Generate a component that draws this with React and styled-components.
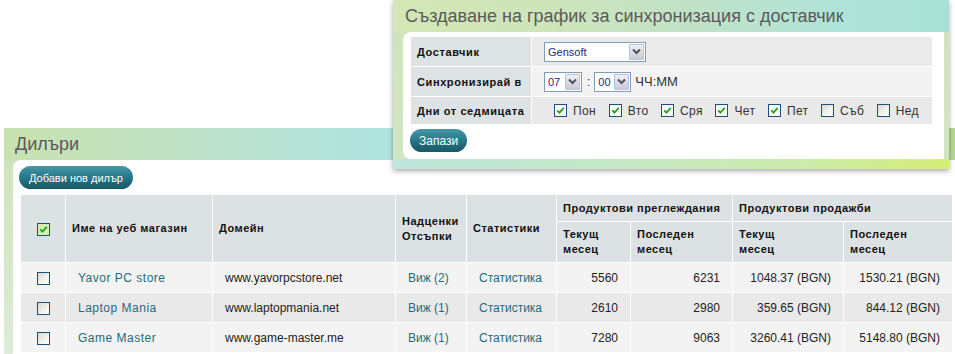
import React from "react";
import styled, { createGlobalStyle } from "styled-components";

const Global = createGlobalStyle`
  html, body { margin: 0; padding: 0; background: #fff; }
  body { font-family: "Liberation Sans", Arial, sans-serif; color: #222; }
  * { box-sizing: border-box; }
`;

const Page = styled.div`
  position: relative;
  width: 955px;
  height: 354px;
  overflow: hidden;
  padding: 128px 0 0 4px;
`;

const Panel = styled.section`
  width: 960px;
  padding: 0 0 0 9px;
  background:
    linear-gradient(90deg, #c9e2b0 0%, #c2e1c0 14%, #b6e3d6 30%, #afe3df 40%, #b6e4da 70%, #bfe1c0 88%, #b3d78e 100%) top / 100% 32px no-repeat,
    linear-gradient(180deg, #cbe3b6 0%, #d6e8cc 60%, #dfecd8 100%);
`;

const PanelTitle = styled.h2`
  margin: 0;
  height: 32px;
  line-height: 32px;
  padding-left: 2px;
  font-size: 18px;
  font-weight: normal;
  color: #5a5a5a;
`;

const PanelInner = styled.div`
  background: #fff;
  border-top-left-radius: 8px;
  padding: 6px 0 6px 6px;
`;

const PillButton = styled.button`
  display: inline-flex;
  align-items: center;
  height: 23px;
  padding: 0 ${(p) => p.$pad || 10}px;
  border: none;
  border-radius: 12px;
  background: linear-gradient(180deg, #4697a8 0%, #2c7f90 40%, #1f6676 75%, #1a5a68 100%);
  color: #fff;
  font-family: "Liberation Sans", Arial, sans-serif;
  font-size: ${(p) => p.$fs || 12}px;
  cursor: pointer;
`;

const DataTable = styled.table`
  margin: 5px 0 0 1px;
  width: 932px;
  table-layout: fixed;
  border-collapse: collapse;
`;

const Th = styled.th`
  background: #dce1e3;
  border: 1px solid #fff;
  padding: 0 6px;
  text-align: ${(p) => (p.$center ? "center" : "left")};
  vertical-align: middle;
  font-size: 11px;
  font-weight: bold;
  letter-spacing: 0.5px;
  line-height: 15px;
  color: #111;
`;

const HeadRow = styled.tr`
  height: ${(p) => p.$h}px;
`;

const BodyRow = styled.tr`
  height: 30px;
  background: ${(p) => (p.$alt ? "#eae9e9" : "#f4f3f3")};
`;

const Td = styled.td`
  border: 1px solid #fff;
  padding: 0 12px;
  font-size: 12px;
  white-space: nowrap;
  text-align: ${(p) => (p.$align || "left")};
  color: #222;
`;

const Link = styled.a`
  color: #1e6c7a;
  text-decoration: none;
  letter-spacing: ${(p) => (p.$wide ? "0.5px" : "0")};
`;

const Box = styled.span`
  display: inline-flex;
  align-items: center;
  justify-content: center;
  width: 13px;
  height: 13px;
  border: 1px solid #1f4f80;
  background: ${(p) =>
    p.$green
      ? "#d4efb2"
      : p.$checked
      ? "#fbfbf8"
      : "linear-gradient(135deg, #d8d8d0 0%, #efefea 50%, #ffffff 100%)"};
  vertical-align: middle;
`;

const Check = ({ checked, green }) => (
  <Box $checked={checked} $green={green}>
    {checked && (
      <svg width="9" height="9" viewBox="0 0 9 9">
        <path d="M1.2 4.4 L3.4 6.6 L7.8 1.8" fill="none" stroke="#27a02a" strokeWidth="1.8" />
      </svg>
    )}
  </Box>
);

/* ---------- Dialog ---------- */

const Dialog = styled.div`
  position: absolute;
  top: 0;
  left: 393px;
  width: 556px;
  padding: 0 5px 10px 10px;
  background:
    linear-gradient(90deg, #bfe5dc 0%, #c6e8c8 40%, #cdeba8 75%, #d6ee76 100%) bottom / 100% 10px no-repeat,
    linear-gradient(90deg, #d4e6b5 0%, #cde4bb 30%, #c0e2c8 55%, #aee3da 82%, #a8e0d6 100%) top / 100% 32px no-repeat,
    linear-gradient(180deg, #d0e4b9 0%, #d3e6c4 100%);
  box-shadow: 0 2px 5px rgba(0, 0, 0, 0.35);
`;

const DialogTitle = styled.h2`
  margin: 0;
  height: 32px;
  line-height: 32px;
  padding-left: 2px;
  font-size: 18px;
  font-weight: normal;
  color: #5a5a5a;
  white-space: nowrap;
`;

const DialogInner = styled.div`
  background: #fff;
  border-radius: 8px 0 0 8px;
  padding: 4px 0 7px 7px;
`;

const FormTable = styled.table`
  width: 523px;
  border-collapse: collapse;
  margin-bottom: 4px;
`;

const FormRow = styled.tr`
  height: ${(p) => p.$h}px;
`;

const Label = styled.th`
  width: 121px;
  background: #dde2e4;
  border: 1px solid #fff;
  padding: 0 6px;
  text-align: left;
  font-size: 11px;
  font-weight: bold;
  letter-spacing: 0.6px;
  color: #111;
  white-space: nowrap;
`;

const Value = styled.td`
  background: ${(p) => p.$bg};
  border: 1px solid #fff;
  padding: 0 0 0 ${(p) => p.$pl || 12}px;
`;

const Inline = styled.div`
  display: flex;
  align-items: center;
  gap: ${(p) => p.$gap || 0}px;
`;

const SelectBox = styled.span`
  display: inline-flex;
  align-items: center;
  justify-content: space-between;
  width: ${(p) => p.$w}px;
  height: ${(p) => p.$h || 18}px;
  border: 1px solid #7f9db9;
  background: #fff;
  padding: 0 1px 0 3px;
  font-size: 11px;
  color: #1b2a8a;
`;

const Arrow = styled.span`
  display: inline-flex;
  align-items: center;
  justify-content: center;
  width: 15px;
  height: ${(p) => p.$h || 14}px;
  border: 1px solid #b9c3d6;
  border-radius: 1px;
  background: linear-gradient(180deg, #eef0f5 0%, #d5d9e4 60%, #c7ccd9 100%);
`;

const Select = ({ value, w, h, ah }) => (
  <SelectBox $w={w} $h={h}>
    <span>{value}</span>
    <Arrow $h={ah}>
      <svg width="9" height="7" viewBox="0 0 9 7">
        <path d="M1 1.5 L4.5 5 L8 1.5" fill="none" stroke="#4d5363" strokeWidth="2" />
      </svg>
    </Arrow>
  </SelectBox>
);

const Colon = styled.span`
  font-size: 12px;
  color: #333;
  margin: 0 4px 0 5px;
`;

const Hint = styled.span`
  margin-left: 4px;
  font-size: 13px;
  color: #333;
`;

const Day = styled.label`
  display: inline-flex;
  align-items: center;
  gap: 6px;
  font-size: 12px;
  letter-spacing: 0.4px;
  color: #333;
`;

const days = [
  ["Пон", true],
  ["Вто", true],
  ["Сря", true],
  ["Чет", true],
  ["Пет", true],
  ["Съб", false],
  ["Нед", false],
];

const dealers = [
  ["Yavor PC store", "www.yavorpcstore.net", "Виж (2)", "5560", "6231", "1048.37 (BGN)", "1530.21 (BGN)"],
  ["Laptop Mania", "www.laptopmania.net", "Виж (1)", "2610", "2980", "359.65 (BGN)", "844.12 (BGN)"],
  ["Game Master", "www.game-master.me", "Виж (1)", "7280", "9063", "3260.41 (BGN)", "5148.80 (BGN)"],
];

const widths = [45, 147, 183, 71, 90, 74, 102, 111, 109];

export default function App() {
  return (
    <>
      <Global />
      <Page>
        <Panel>
          <PanelTitle>Дилъри</PanelTitle>
          <PanelInner>
            <PillButton $fs={11} $pad={10}>Добави нов дилър</PillButton>
            <DataTable>
              <colgroup>
                {widths.map((w, i) => (
                  <col key={i} style={{ width: w }} />
                ))}
              </colgroup>
              <thead>
                <HeadRow $h={27}>
                  <Th rowSpan={2} $center>
                    <Check checked green />
                  </Th>
                  <Th rowSpan={2}>Име на уеб магазин</Th>
                  <Th rowSpan={2}>Домейн</Th>
                  <Th rowSpan={2}>
                    Надценки
                    <br />
                    Отсъпки
                  </Th>
                  <Th rowSpan={2}>Статистики</Th>
                  <Th colSpan={2}>Продуктови преглеждания</Th>
                  <Th colSpan={2}>Продуктови продажби</Th>
                </HeadRow>
                <HeadRow $h={41}>
                  <Th>
                    Текущ
                    <br />
                    месец
                  </Th>
                  <Th>
                    Последен
                    <br />
                    месец
                  </Th>
                  <Th>
                    Текущ
                    <br />
                    месец
                  </Th>
                  <Th>
                    Последен
                    <br />
                    месец
                  </Th>
                </HeadRow>
              </thead>
              <tbody>
                {dealers.map((d, i) => (
                  <BodyRow key={d[0]} $alt={i % 2 === 1}>
                    <Td $align="center" style={{ padding: 0 }}>
                      <Check />
                    </Td>
                    <Td>
                      <Link $wide>{d[0]}</Link>
                    </Td>
                    <Td>{d[1]}</Td>
                    <Td>
                      <Link>{d[2]}</Link>
                    </Td>
                    <Td>
                      <Link>Статистика</Link>
                    </Td>
                    <Td $align="right">{d[3]}</Td>
                    <Td $align="right">{d[4]}</Td>
                    <Td $align="right">{d[5]}</Td>
                    <Td $align="right">{d[6]}</Td>
                  </BodyRow>
                ))}
              </tbody>
            </DataTable>
          </PanelInner>
        </Panel>

        <Dialog>
          <DialogTitle>Създаване на график за синхронизация с доставчик</DialogTitle>
          <DialogInner>
            <FormTable>
              <tbody>
                <FormRow $h={30}>
                  <Label>Доставчик</Label>
                  <Value $bg="#ebeaea">
                    <Select value="Gensoft" w={102} h={20} ah={16} />
                  </Value>
                </FormRow>
                <FormRow $h={30}>
                  <Label>Синхронизирай в</Label>
                  <Value $bg="#f4f3f3">
                    <Inline>
                      <Select value="07" w={38} h={20} ah={16} />
                      <Colon>:</Colon>
                      <Select value="00" w={37} h={20} ah={16} />
                      <Hint>ЧЧ:ММ</Hint>
                    </Inline>
                  </Value>
                </FormRow>
                <FormRow $h={28}>
                  <Label>Дни от седмицата</Label>
                  <Value $bg="#e9e9e9" $pl={22}>
                    <Inline $gap={12.5}>
                      {days.map(([d, c]) => (
                        <Day key={d}>
                          <Check checked={c} />
                          {d}
                        </Day>
                      ))}
                    </Inline>
                  </Value>
                </FormRow>
              </tbody>
            </FormTable>
            <PillButton $pad={9}>Запази</PillButton>
          </DialogInner>
        </Dialog>
      </Page>
    </>
  );
}
